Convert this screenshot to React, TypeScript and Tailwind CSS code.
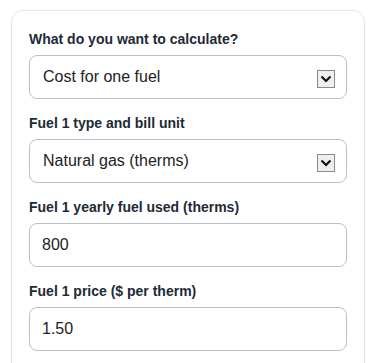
import { useState } from 'react'

function Arrow() {
  return (
    <span className="pointer-events-none absolute right-[12px] top-[15px] flex h-[18px] w-[18px] items-center justify-center border border-[#8a8a8a] bg-[#efefef]">
      <svg width="12" height="8" viewBox="0 0 12 8" fill="none">
        <path d="M1.5 1.5 L6 6 L10.5 1.5" stroke="#111" strokeWidth="2.2" />
      </svg>
    </span>
  )
}

function SelectField({ label, value, options }: { label: string; value: string; options: string[] }) {
  const [v, setV] = useState(value)
  return (
    <div className="flex flex-col">
      <label className="mb-[7px] text-[14px] font-bold leading-[18px] text-[#1e2a36]">{label}</label>
      <div className="relative">
        <select
          value={v}
          onChange={(e) => setV(e.target.value)}
          className="h-[44px] w-full appearance-none rounded-[8px] border border-[#b9c1c9] bg-white pl-[13px] pr-10 text-[16px] text-[#222] outline-none"
        >
          {options.map((o) => (
            <option key={o}>{o}</option>
          ))}
        </select>
        <Arrow />
      </div>
    </div>
  )
}

function InputField({ label, value }: { label: string; value: string }) {
  return (
    <div className="flex flex-col">
      <label className="mb-[7px] text-[14px] font-bold leading-[18px] text-[#1e2a36]">{label}</label>
      <input
        defaultValue={value}
        className="h-[44px] w-full rounded-[8px] border border-[#b9c1c9] bg-white px-[12px] text-[16px] text-[#222] outline-none"
      />
    </div>
  )
}

export default function App() {
  return (
    <div className="h-[363px] overflow-hidden bg-white pl-[11px] pr-[10px] pt-[10px] font-['Liberation_Sans',Arial,sans-serif]">
      {/* Calculator card */}
      <div className="flex flex-col gap-[15px] rounded-[12px] border border-[#dfe5eb] px-[17px] pb-6 pt-[19px] shadow-[0_1px_3px_rgba(0,0,0,0.04)]">
        <SelectField
          label="What do you want to calculate?"
          value="Cost for one fuel"
          options={['Cost for one fuel', 'Compare two fuels']}
        />
        <SelectField
          label="Fuel 1 type and bill unit"
          value="Natural gas (therms)"
          options={['Natural gas (therms)', 'Electricity (kWh)', 'Propane (gallons)', 'Heating oil (gallons)']}
        />
        <InputField label="Fuel 1 yearly fuel used (therms)" value="800" />
        <InputField label="Fuel 1 price ($ per therm)" value="1.50" />
      </div>
    </div>
  )
}
